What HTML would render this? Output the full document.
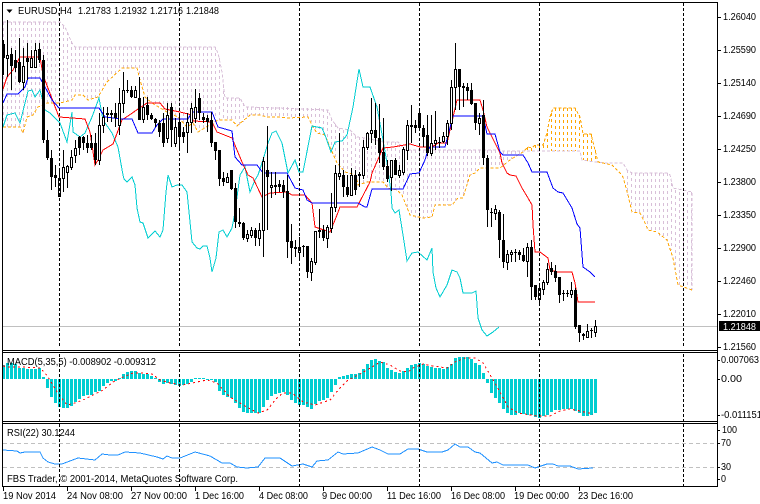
<!DOCTYPE html>
<html><head><meta charset="utf-8"><title>EURUSD,H4</title>
<style>
html,body{margin:0;padding:0;background:#fff;width:760px;height:504px;overflow:hidden}
svg{display:block}
text{font-family:"Liberation Sans",sans-serif;font-size:10px;fill:#000}
.c{shape-rendering:crispEdges;fill:none}
</style></head><body>
<svg width="760" height="504" viewBox="0 0 760 504" xmlns="http://www.w3.org/2000/svg">
<rect width="760" height="504" fill="#fff"/>

<!-- cloud hatch -->
<path class="c" stroke="#d8bfd8" stroke-dasharray="3 3" d="M3.5 22V127M7.5 22V127M11.5 22V127M15.5 22V127M19.5 22V127M23.5 22V133M27.5 22V117M31.5 22V116M35.5 22V113M39.5 22V107M43.5 22V105M47.5 22V103M51.5 22V103M55.5 22V103M59.5 22V103M63.5 26V103M67.5 32V102M71.5 41V100M75.5 47V95M79.5 47V95M83.5 47V95M87.5 47V99M91.5 47V99M95.5 47V98M99.5 47V96M103.5 47V89M107.5 47V82M111.5 47V78M115.5 47V74M119.5 47V71M123.5 47V68M127.5 47V68M131.5 47V68M135.5 47V68M139.5 47V76M143.5 47V90M147.5 47V99M151.5 47V102M155.5 47V105M159.5 47V107M163.5 47V109M167.5 47V112M171.5 47V114M175.5 47V115M179.5 47V118M183.5 47V122M187.5 47V127M191.5 47V125M195.5 47V127M199.5 47V131M203.5 47V128M207.5 47V126M211.5 47V124M215.5 47V122M219.5 58V120M223.5 85V120M227.5 98V120M231.5 98V120M235.5 98V122M239.5 98V126M243.5 103V122M247.5 107V118M251.5 107V115M255.5 107V115M259.5 107V115M263.5 107V116M267.5 107V117M271.5 107V117M275.5 107V117M279.5 107V117M283.5 107V118M287.5 107V118M291.5 108V117M295.5 108V117M299.5 108V117M303.5 108V117M307.5 108V117M311.5 108V122M315.5 108V130M319.5 108V134M323.5 109V135M327.5 110V137M331.5 118V150M335.5 124V158M339.5 128V165M343.5 130V170M347.5 130V173M351.5 133V175M355.5 136V178M359.5 137V185M363.5 138V183M367.5 139V182M371.5 140V182M375.5 140V182M379.5 141V182M383.5 142V182M387.5 142V187M391.5 142V188M395.5 142V190M399.5 144V192M403.5 149V197M407.5 150V207M411.5 150V216M415.5 150V218M419.5 150V218M423.5 150V218M427.5 150V217M431.5 150V217M435.5 150V205M439.5 150V205M443.5 150V205M447.5 150V205M451.5 150V205M455.5 150V201M459.5 150V198M463.5 150V198M467.5 150V185M471.5 150V175M475.5 150V173M479.5 150V168M483.5 150V168M487.5 150V168M491.5 150V168M495.5 150V168M499.5 150V168M503.5 151V165M507.5 151V162M511.5 151V159M515.5 151V156M519.5 151V154M627.5 170V195M631.5 172V208M635.5 173V213M639.5 173V213M643.5 173V220M647.5 173V228M651.5 173V231M655.5 173V232M659.5 173V236M663.5 173V238M667.5 173V240M671.5 183V250M675.5 190V270M679.5 192V286M683.5 192V287M687.5 192V288M691.5 192V290"/>
<path class="c" stroke="#ffa500" stroke-dasharray="3 3" d="M527.5 147V151M531.5 148V151M535.5 145V151M539.5 145V151M543.5 145V151M547.5 133V151M551.5 113V151M555.5 108V151M559.5 108V151M563.5 108V151M567.5 108V151M571.5 108V151M575.5 108V151M579.5 115V151M583.5 134V160M587.5 134V161M591.5 134V161M595.5 150V162"/>

<!-- span B / span A -->
<polyline class="c" stroke="#d8bfd8" stroke-dasharray="3 2" points="3,22 60,22 65,27 72,43 75,47 215,47 218,53 222,72 225,98 240,98 245,107 250,107 328,110 332,120 338,128 350,130 357,137 365,138 383,142 398,142 405,150 500,150 500,151 580,151 582,160 595,162 607,163 623,163 627,170 632,173 667,173 670,175 673,188 692,192 692,290"/>
<polyline class="c" stroke="#ffa500" stroke-dasharray="3 2" points="3,127 20,127 23,133 27,117 33,115 38,107 47,103 60,103 72,100 75,95 83,95 88,100 98,97 107,82 122,68 137,68 140,80 145,97 152,103 167,112 178,117 187,127 193,123 198,132 213,123 218,120 232,120 237,126 250,115 260,115 267,117 280,117 288,118 308,117 313,127 317,133 325,135 330,147 337,163 345,172 355,175 357,180 358,185 367,182 383,182 388,188 397,190 402,195 410,215 423,218 432,217 435,205 452,205 458,198 463,198 470,175 475,173 480,168 500,168 510,160 513,158 523,152 528,147 532,148 535,145 543,145 547,133 550,117 553,108 575,108 580,117 583,134 591,134 595,150 598,162 603,163 612,165 620,173 623,177 628,195 632,212 640,213 645,223 648,230 657,232 667,240 673,258 678,285 692,290"/>

<!-- grey price line -->
<path class="c" stroke="#c0c0c0" d="M3 326.5H717"/>

<!-- indicator lines -->
<polyline class="c" stroke="#00ced1" points="3,127 7,115 15,113 20,123 24,107 28,91 32,90 35,97 40,90 45,110 50,113 60,123 67,142 72,112 73,132 80,137 85,133 92,117 99,98 103,120 112,133 118,147 123,175 124,179 127,182 132,177 135,185 137,208 140,222 143,223 148,238 155,231 160,237 163,230 166,192 168,175 172,187 177,185 182,185 187,192 190,222 192,242 197,248 200,249 203,246 207,246 210,258 212,272 216,258 219,232 223,230 227,237 232,228 235,212 240,175 245,167 250,192 255,180 258,175 263,160 268,143 272,133 276,131 282,143 288,173 295,160 299,172 303,172 312,126 322,128 325,135 331,152 335,142 342,141 347,135 353,107 359,69 363,87 370,87 377,107 383,140 387,163 391,192 392,208 395,213 399,210 403,235 407,261 412,253 418,252 427,260 432,248 433,272 436,288 440,297 447,285 452,270 457,272 460,278 463,293 472,293 476,291 478,318 482,330 487,336 493,332 499,327"/>
<polyline class="c" stroke="#ff0000" points="3,89 7,77 13,70 20,57 40,57 43,75 59,117 85,119 90,132 95,165 98,160 103,150 113,144 122,120 147,103 160,103 165,109 180,112 192,115 193,121 212,122 217,132 232,138 242,162 248,175 253,178 262,197 270,193 287,192 292,195 305,195 312,203 315,227 330,232 337,215 340,207 357,207 370,182 372,173 383,148 393,147 410,144 420,147 432,147 438,143 447,143 457,100 480,100 483,110 487,127 500,153 502,163 507,173 510,175 516,176 522,188 528,198 532,205 533,225 535,252 540,252 548,258 550,270 558,272 572,272 575,283 578,302 595,302"/>
<polyline class="c" stroke="#0000ff" points="3,103 7,94 18,94 25,87 28,78 40,78 45,87 52,100 59,108 99,108 105,117 122,119 132,119 138,133 152,133 157,125 163,119 188,119 192,112 212,112 218,127 232,131 235,157 242,165 257,165 263,173 287,173 295,188 303,190 307,200 312,203 358,203 365,207 367,207 372,189 403,189 410,174 419,173 425,160 428,150 430,147 445,147 453,116 483,116 487,134 495,134 500,152 503,155 523,155 528,163 532,172 547,172 553,188 558,192 563,193 572,208 577,224 580,228 583,267 590,272 595,277"/>

<!-- candle wicks -->
<path class="c" stroke="#000" d="M3.5 40V75M7.5 20V77M11.5 48V90M15.5 50V72M19.5 38V83M23.5 48V90M27.5 43V80M31.5 50V68M35.5 43V68M39.5 43V63M43.5 55V143M47.5 130V160M51.5 150V190M55.5 165V187M59.5 168V196M63.5 150V192M67.5 165V188M71.5 150V170M75.5 140V163M79.5 136V155M83.5 136V150M87.5 135V153M91.5 135V150M95.5 133V165M99.5 113V165M103.5 107V133M107.5 107V122M111.5 110V122M115.5 103V127M119.5 88V135M123.5 72V113M127.5 80V93M131.5 86V98M135.5 86V98M139.5 77V120M143.5 97V123M147.5 97V120M151.5 113V120M155.5 118V127M159.5 120V137M163.5 113V147M167.5 103V143M171.5 103V147M175.5 118V147M179.5 113V150M183.5 127V143M187.5 113V153M191.5 103V133M195.5 89V123M199.5 93V120M203.5 113V123M207.5 115V132M211.5 112V147M215.5 142V160M219.5 150V186M223.5 172V186M227.5 173V183M231.5 170V190M235.5 183V228M239.5 208V227M243.5 222V240M247.5 230V242M251.5 227V238M255.5 228V246M259.5 223V246M263.5 157V257M267.5 126V230M271.5 172V198M275.5 172V195M279.5 180V192M283.5 180V198M287.5 175V258M291.5 224V264M295.5 240V257M299.5 237V258M303.5 245V257M307.5 246V278M311.5 258V281M315.5 231V265M319.5 209V238M323.5 225V241M327.5 225V248M331.5 193V233M335.5 165V212M339.5 133V180M343.5 170V197M347.5 175V197M351.5 168V195M355.5 170V195M359.5 172V187M363.5 140V179M367.5 132V150M371.5 98V143M375.5 103V145M379.5 104V163M383.5 118V170M387.5 160V182M391.5 160V191M395.5 158V175M399.5 165V178M403.5 147V175M407.5 120V160M411.5 105V143M415.5 120V133M419.5 110V130M423.5 125V147M427.5 115V156M431.5 115V156M435.5 111V150M439.5 137V148M443.5 132V143M447.5 120V145M451.5 80V130M455.5 43V110M459.5 69V110M463.5 83V107M467.5 83V100M471.5 83V105M475.5 103V130M479.5 113V135M483.5 100V165M487.5 155V227M491.5 208V227M495.5 205V220M499.5 210V258M503.5 214V268M507.5 250V270M511.5 250V262M515.5 249V262M519.5 250V260M523.5 248V262M527.5 243V277M531.5 240V300M535.5 285V300M539.5 283V304M543.5 280V295M547.5 263V285M551.5 262V275M555.5 265V282M559.5 277V303M563.5 290V301M567.5 290V297M571.5 282V298M575.5 288V329M579.5 325V342M583.5 333V340M587.5 324V338M591.5 328V338M595.5 320V337"/>
<!-- black bodies -->
<path class="c" stroke="#000" stroke-width="3" d="M3.5 44V58M11.5 54V66M15.5 60V68M19.5 62V82M27.5 58V62M39.5 49V60M43.5 60V140M47.5 140V158M51.5 158V177M55.5 175V178M79.5 137V148M83.5 137V143M87.5 143V148M91.5 143V148M95.5 143V160M107.5 113V115M111.5 113V115M115.5 113V118M127.5 90V91M131.5 90V97M139.5 98V120M147.5 105V115M151.5 115V119M155.5 119V123M159.5 123V132M163.5 123V143M171.5 107V130M179.5 122V137M183.5 132V137M199.5 98V113M203.5 117V120M207.5 118V122M211.5 120V143M215.5 142V151M219.5 150V179M223.5 178V182M231.5 170V189M235.5 188V222M239.5 222V224M243.5 223V238M255.5 230V238M267.5 170V177M275.5 185V187M279.5 184V187M283.5 185V192M287.5 191V242M291.5 241V248M295.5 247V249M303.5 246V247M307.5 246V272M319.5 230V232M323.5 230V238M343.5 175V187M347.5 187V195M355.5 175V190M359.5 174V176M375.5 130V138M379.5 138V153M383.5 152V167M387.5 166V179M395.5 160V175M411.5 125V127M415.5 125V128M419.5 113V128M423.5 128V137M427.5 135V153M439.5 142V143M459.5 69V87M463.5 86V88M467.5 87V91M471.5 90V104M475.5 103V123M483.5 115V158M487.5 158V210M491.5 212V213M499.5 212V240M503.5 240V262M515.5 252V253M519.5 252V255M523.5 255V261M531.5 247V287M535.5 285V297M551.5 268V272M555.5 271V278M559.5 277V295M563.5 293V294M567.5 293V294M575.5 290V327M579.5 325V333M583.5 334V336M591.5 330V331"/>
<!-- white bodies -->
<path class="c" stroke="#000" fill="#fff" style="fill:#fff" d="M6.5 55.5h2v3h-2zM22.5 66.5h2v16h-2zM30.5 58.5h2v9h-2zM34.5 50.5h2v17h-2zM58.5 178.5h2v18h-2zM62.5 167.5h2v11h-2zM66.5 166.5h2v6h-2zM70.5 157.5h2v10h-2zM74.5 148.5h2v7h-2zM98.5 125.5h2v35h-2zM102.5 117.5h2v8h-2zM118.5 103.5h2v22h-2zM122.5 90.5h2v13h-2zM134.5 90.5h2v7h-2zM142.5 107.5h2v12h-2zM166.5 115.5h2v23h-2zM174.5 127.5h2v16h-2zM186.5 122.5h2v10h-2zM190.5 108.5h2v14h-2zM194.5 107.5h2v11h-2zM226.5 177.5h2v5h-2zM246.5 234.5h2v4h-2zM250.5 230.5h2v5h-2zM258.5 230.5h2v8h-2zM262.5 161.5h2v69h-2zM270.5 185.5h2v2h-2zM298.5 247.5h2v5h-2zM310.5 261.5h2v11h-2zM314.5 231.5h2v31h-2zM326.5 227.5h2v11h-2zM330.5 207.5h2v21h-2zM334.5 173.5h2v34h-2zM338.5 173.5h2v3h-2zM350.5 175.5h2v20h-2zM362.5 147.5h2v28h-2zM366.5 133.5h2v14h-2zM370.5 130.5h2v3h-2zM390.5 160.5h2v17h-2zM398.5 170.5h2v5h-2zM402.5 149.5h2v23h-2zM406.5 125.5h2v25h-2zM430.5 143.5h2v10h-2zM434.5 140.5h2v3h-2zM442.5 136.5h2v5h-2zM446.5 123.5h2v13h-2zM450.5 87.5h2v36h-2zM454.5 69.5h2v18h-2zM478.5 118.5h2v5h-2zM494.5 209.5h2v4h-2zM506.5 254.5h2v8h-2zM510.5 252.5h2v2h-2zM526.5 247.5h2v14h-2zM538.5 288.5h2v11h-2zM542.5 282.5h2v7h-2zM546.5 269.5h2v13h-2zM570.5 290.5h2v4h-2zM586.5 331.5h2v6h-2zM594.5 326.5h2v6h-2z"/>

<!-- MACD histogram -->
<path class="c" stroke="#00ced1" stroke-width="3" d="M3.5 379V365M7.5 379V363M11.5 379V363M15.5 379V364M19.5 379V368M23.5 379V368M27.5 379V369M31.5 379V369M35.5 379V369M39.5 379V368M43.5 379V377M47.5 379V388M51.5 379V397M55.5 379V403M59.5 379V407M63.5 379V408M67.5 379V408M71.5 379V406M75.5 379V402M79.5 379V399M83.5 379V396M87.5 379V395M91.5 379V395M95.5 379V392M99.5 379V391M103.5 379V386M107.5 379V383M111.5 379V381M115.5 379V381M119.5 379V378M123.5 379V374M127.5 379V372M131.5 379V371M135.5 379V371M139.5 379V373M143.5 379V374M147.5 379V374M151.5 379V376M155.5 379V378M159.5 379V382M163.5 379V384M167.5 379V383M171.5 379V384M175.5 379V385M179.5 379V386M183.5 379V385M187.5 379V384M191.5 379V382M195.5 379V378M199.5 379V378M203.5 379V378M207.5 379V380M211.5 379V380M215.5 379V382M219.5 379V391M223.5 379V395M227.5 379V397M231.5 379V398M235.5 379V403M239.5 379V408M243.5 379V412M247.5 379V413M251.5 379V413M255.5 379V413M259.5 379V413M263.5 379V407M267.5 379V400M271.5 379V396M275.5 379V394M279.5 379V393M283.5 379V392M287.5 379V395M291.5 379V400M295.5 379V403M299.5 379V405M303.5 379V405M307.5 379V407M311.5 379V409M315.5 379V404M319.5 379V401M323.5 379V400M327.5 379V398M331.5 379V392M335.5 379V385M339.5 379V377M343.5 379V376M347.5 379V375M351.5 379V374M355.5 379V374M359.5 379V373M363.5 379V369M367.5 379V364M371.5 379V360M375.5 379V359M379.5 379V361M383.5 379V362M387.5 379V368M391.5 379V370M395.5 379V372M399.5 379V373M403.5 379V371M407.5 379V368M411.5 379V365M415.5 379V364M419.5 379V363M423.5 379V364M427.5 379V366M431.5 379V367M435.5 379V368M439.5 379V368M443.5 379V369M447.5 379V367M451.5 379V364M455.5 379V358M459.5 379V357M463.5 379V357M467.5 379V357M471.5 379V359M475.5 379V363M479.5 379V365M483.5 379V373M487.5 379V383M491.5 379V393M495.5 379V398M499.5 379V403M503.5 379V409M507.5 379V413M511.5 379V415M515.5 379V415M519.5 379V413M523.5 379V414M527.5 379V415M531.5 379V415M535.5 379V417M539.5 379V418M543.5 379V416M547.5 379V415M551.5 379V412M555.5 379V410M559.5 379V410M563.5 379V409M567.5 379V409M571.5 379V409M575.5 379V411M579.5 379V413M583.5 379V416M587.5 379V416M591.5 379V415M595.5 379V413"/>
<polyline class="c" stroke="#ff0000" stroke-dasharray="2 3" points="3,366 8,367 20,367 40,368 45,373 50,380 57,392 67,405 75,403 83,400 93,395 103,390 113,382 123,377 133,373 143,373 152,374 160,380 170,383 183,385 197,382 207,380 217,383 230,397 243,405 258,413 267,410 277,398 283,393 292,393 303,402 315,405 330,400 340,388 348,380 360,374 372,367 380,362 390,365 400,371 408,372 413,368 423,364 433,366 447,368 455,362 465,358 475,358 483,363 492,378 500,392 508,407 518,413 537,416 550,416 560,411 570,409 580,411 593,414"/>

<!-- RSI -->
<path class="c" stroke="#c0c0c0" stroke-dasharray="4 3" d="M3 443.5H717M3 467.5H717"/>
<polyline class="c" stroke="#1e90ff" points="3,450 17,451 20,453 25,452 40,452 43,458 48,462 55,464 62,464 70,461 78,458 95,460 102,454 110,455 118,455 125,452 140,453 157,457 163,459 167,456 172,458 180,458 195,452 210,456 222,463 230,463 237,467 247,468 258,467 265,458 280,458 292,466 303,464 312,467 317,461 328,460 338,452 343,454 358,453 372,447 380,450 388,454 400,454 408,449 418,449 427,452 442,452 448,450 455,444 460,447 468,447 475,452 480,453 492,463 497,462 503,465 528,465 535,468 547,464 553,464 558,466 570,466 578,469 593,468"/>

<!-- period separators -->
<path class="c" stroke="#000" stroke-dasharray="3 2" d="M59.5 3V347M179.5 3V347M299.5 3V347M419.5 3V347M539.5 3V347M683.5 3V347M59.5 354V421M179.5 354V421M299.5 354V421M419.5 354V421M539.5 354V421M683.5 354V421M59.5 424V486M179.5 424V486M299.5 424V486M419.5 424V486M539.5 424V486M683.5 424V486"/>

<!-- frames -->
<path class="c" stroke="#000" d="M2.5 2V486M2 2.5H718M2 350.5H718M2 352.5H718M2 421.5H718M2 423.5H718M2 486.5H718M717.5 2V487"/>
<!-- ticks -->
<path class="c" stroke="#000" d="M717 17.5h4M717 50.5h4M717 83.5h4M717 116.5h4M717 149.5h4M717 182.5h4M717 215.5h4M717 248.5h4M717 281.5h4M717 314.5h4M717 347.5h4M717 360.5h3M717 379.5h3M717 415.5h3M717 430.5h3M717 443.5h3M717 467.5h3M717 479.5h3M3.5 486V491M67.5 486V491M131.5 486V491M195.5 486V491M259.5 486V491M323.5 486V491M387.5 486V491M451.5 486V491M515.5 486V491M579.5 486V491"/>

<!-- title -->
<path d="M6.5 9.5H12.5L9.5 13Z" fill="#000"/>
<text x="18" y="14" textLength="54" lengthAdjust="spacingAndGlyphs">EURUSD,H4</text>
<text x="78" y="14" textLength="33" lengthAdjust="spacingAndGlyphs">1.21783</text>
<text x="114" y="14" textLength="33" lengthAdjust="spacingAndGlyphs">1.21932</text>
<text x="150" y="14" textLength="33" lengthAdjust="spacingAndGlyphs">1.21716</text>
<text x="186" y="14" textLength="33" lengthAdjust="spacingAndGlyphs">1.21848</text>

<!-- price axis -->
<text x="723" y="20" textLength="33" lengthAdjust="spacingAndGlyphs">1.26040</text>
<text x="723" y="53" textLength="33" lengthAdjust="spacingAndGlyphs">1.25590</text>
<text x="723" y="86" textLength="33" lengthAdjust="spacingAndGlyphs">1.25140</text>
<text x="723" y="119" textLength="33" lengthAdjust="spacingAndGlyphs">1.24690</text>
<text x="723" y="152" textLength="33" lengthAdjust="spacingAndGlyphs">1.24250</text>
<text x="723" y="185" textLength="33" lengthAdjust="spacingAndGlyphs">1.23800</text>
<text x="723" y="218" textLength="33" lengthAdjust="spacingAndGlyphs">1.23350</text>
<text x="723" y="251" textLength="33" lengthAdjust="spacingAndGlyphs">1.22900</text>
<text x="723" y="284" textLength="33" lengthAdjust="spacingAndGlyphs">1.22460</text>
<text x="723" y="317" textLength="33" lengthAdjust="spacingAndGlyphs">1.22010</text>
<rect x="719" y="321" width="41" height="10" fill="#000"/>
<text x="723" y="330" textLength="33" lengthAdjust="spacingAndGlyphs" style="fill:#fff">1.21848</text>
<text x="723" y="350" textLength="33" lengthAdjust="spacingAndGlyphs">1.21560</text>

<!-- MACD / RSI axis -->
<text x="721" y="363" textLength="38" lengthAdjust="spacingAndGlyphs">0.007063</text>
<text x="721" y="382" textLength="21" lengthAdjust="spacingAndGlyphs">0.00</text>
<text x="721" y="418" textLength="41" lengthAdjust="spacingAndGlyphs">-0.011151</text>
<text x="722" y="433" textLength="15" lengthAdjust="spacingAndGlyphs">100</text>
<text x="721" y="446" textLength="10" lengthAdjust="spacingAndGlyphs">70</text>
<text x="721" y="470" textLength="10" lengthAdjust="spacingAndGlyphs">30</text>
<text x="721" y="482" textLength="5" lengthAdjust="spacingAndGlyphs">0</text>

<!-- pane labels -->
<text x="7" y="365" textLength="149" lengthAdjust="spacingAndGlyphs">MACD(5,35,5) -0.008902 -0.009312</text>
<text x="7" y="436" textLength="68" lengthAdjust="spacingAndGlyphs">RSI(22) 30.1244</text>
<text x="7" y="482" textLength="231" lengthAdjust="spacingAndGlyphs">FBS Trader, © 2001-2014, MetaQuotes Software Corp.</text>

<!-- time axis -->
<text x="3" y="499" textLength="53" lengthAdjust="spacingAndGlyphs">19 Nov 2014</text>
<text x="67" y="499" textLength="56" lengthAdjust="spacingAndGlyphs">24 Nov 08:00</text>
<text x="131" y="499" textLength="56" lengthAdjust="spacingAndGlyphs">27 Nov 00:00</text>
<text x="195" y="499" textLength="49" lengthAdjust="spacingAndGlyphs">1 Dec 16:00</text>
<text x="259" y="499" textLength="49" lengthAdjust="spacingAndGlyphs">4 Dec 08:00</text>
<text x="322" y="499" textLength="50" lengthAdjust="spacingAndGlyphs">9 Dec 00:00</text>
<text x="387" y="499" textLength="54" lengthAdjust="spacingAndGlyphs">11 Dec 16:00</text>
<text x="451" y="499" textLength="54" lengthAdjust="spacingAndGlyphs">16 Dec 08:00</text>
<text x="514" y="499" textLength="55" lengthAdjust="spacingAndGlyphs">19 Dec 00:00</text>
<text x="578" y="499" textLength="55" lengthAdjust="spacingAndGlyphs">23 Dec 16:00</text>
</svg>
</body></html>
